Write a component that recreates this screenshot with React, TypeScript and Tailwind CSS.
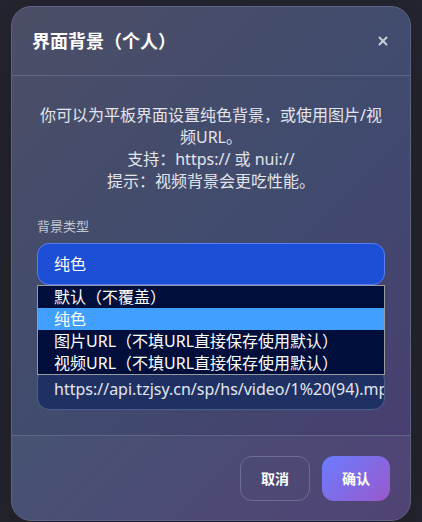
import { X } from 'lucide-react';

const options = [
  '默认（不覆盖）',
  '纯色',
  '图片URL（不填URL直接保存使用默认）',
  '视频URL（不填URL直接保存使用默认）',
];

export default function App() {
  return (
    <div
      className="min-h-[522px] h-[522px] overflow-hidden bg-[#24242e] pt-[6px] pl-[11px]"
      style={{ fontFamily: '"Noto Sans", "Noto Sans CJK SC", sans-serif' }}
    >
      <div className="w-[400px] h-[515px] rounded-[20px] border border-[#5d6384] bg-[linear-gradient(135deg,#4c4e66_0%,#404b6e_50%,#4a3c70_100%)] shadow-2xl text-white flex flex-col overflow-hidden">
        {/* Header */}
        <div className="h-[69px] shrink-0 flex items-center justify-between pl-[20px] pr-[20px] border-b border-[#5f6686]">
          <h1 className="text-[18px] font-bold leading-none">界面背景（个人）</h1>
          <X className="h-[14px] w-[14px] text-[#c9cbd8]" strokeWidth={3.5} />
        </div>

        {/* Body */}
        <div className="relative px-[25px] pt-[28px] pb-[25px] border-b border-[#5f6686]">
          <div className="text-center text-[16px] leading-[22px] text-[#e3e5ee]">
            <p>你可以为平板界面设置纯色背景，或使用图片/视频URL。</p>
            <p>支持：https:// 或 nui://</p>
            <p>提示：视频背景会更吃性能。</p>
          </div>

          <p className="mt-[25px] mb-[8px] text-[13px] leading-[18px] text-[#c3c6d4]">背景类型</p>

          <div className="relative">
            <div className="h-[42px] rounded-[12px] border border-[#5480f0] bg-[#1d4fd6] flex items-center pl-[16px] text-[16px]">
              纯色
            </div>

            {/* open dropdown list */}
            <div className="absolute left-0 right-0 top-[42px] z-10 border border-[#9a9aa2] bg-[#000e3c]">
              {options.map((o, i) => (
                <div
                  key={o}
                  className={
                    i === 1
                      ? 'h-[22px] leading-[22px] pl-[16px] text-[16px] bg-[#409fff] text-white'
                      : 'h-[22px] leading-[22px] pl-[16px] text-[16px] text-white'
                  }
                >
                  {o}
                </div>
              ))}
            </div>
          </div>

          <p className="mt-[57px] mb-[8px] text-[13px] leading-[18px] text-[#c3c6d4]">背景URL</p>
          <div className="h-[42px] rounded-[12px] border border-[#4e5f8e] bg-[#1f3163] flex items-center pl-[16px] pr-[2px] overflow-hidden">
            <span className="whitespace-nowrap text-[16px] text-[#e3e6f0]">https://api.tzjsy.cn/sp/hs/video/1%20(94).mp4</span>
          </div>
        </div>

        {/* Footer */}
        <div className="flex-1 bg-white/[0.04] flex justify-end items-start gap-[12px] pt-[20px] pr-[20px]">
          <button
            type="button"
            className="w-[70px] h-[45px] rounded-[12px] border border-[#6c7092] text-[14px] font-bold text-white"
          >
            取消
          </button>
          <button
            type="button"
            className="w-[68px] h-[45px] rounded-[12px] bg-[linear-gradient(135deg,#6a7dff_0%,#9a58cc_100%)] text-[14px] font-bold text-white"
          >
            确认
          </button>
        </div>
      </div>
    </div>
  );
}
